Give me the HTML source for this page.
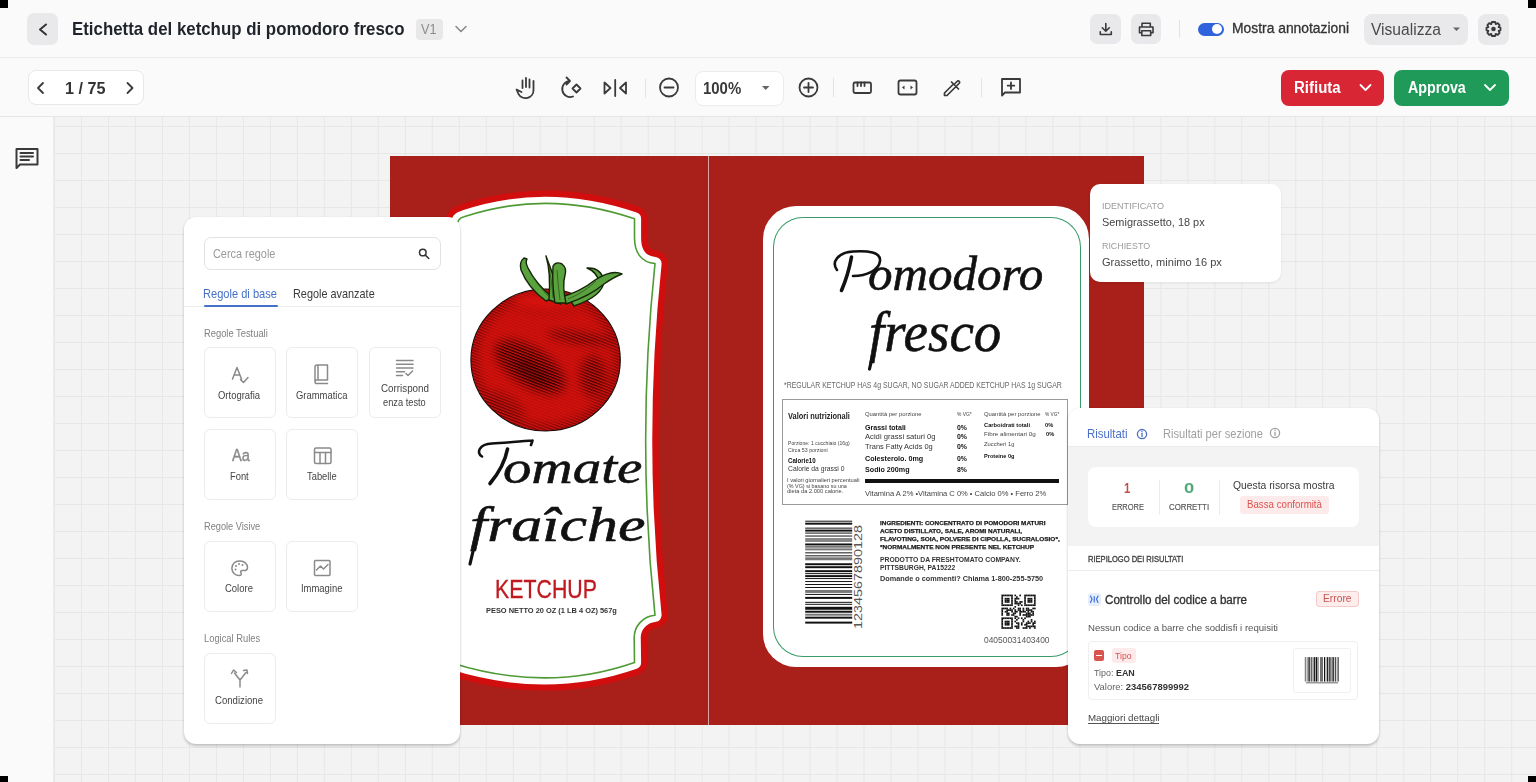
<!DOCTYPE html><html><head><meta charset="utf-8"><style>
*{margin:0;padding:0;box-sizing:border-box}
html,body{width:1536px;height:782px;overflow:hidden;background:#fafafa;font-family:"Liberation Sans",sans-serif}
body{position:relative}
.t{position:absolute;line-height:1;white-space:nowrap;transform-origin:0 0}
.a{position:absolute}
.ibtn{position:absolute;background:#e9e9eb;border-radius:7px}
svg{position:absolute;overflow:visible}
.tile{position:absolute;background:#fff;border:1px solid #ececec;border-radius:6px}
</style></head><body><div class="a" style="left:0;top:0;width:1536px;height:58px;background:#fafafa;border-bottom:1px solid #ebebeb"></div>
<div class="a" style="left:0;top:58px;width:1536px;height:59px;background:#fafafa;border-bottom:1px solid #e6e6e6"></div>
<div class="a" style="left:0;top:117px;width:54px;height:665px;background:#fafafa;border-right:1px solid #ececec"></div>
<div class="a" style="left:54px;top:117px;width:1482px;height:665px;background-color:#f3f3f3;background-image:linear-gradient(to right,#e7e7e7 1px,transparent 1px),linear-gradient(to bottom,#e7e7e7 1px,transparent 1px);background-size:26.99px 27px;background-position:0px 9px"></div>
<div class="ibtn" style="left:27px;top:13px;width:31px;height:32px"></div>
<svg style="left:0;top:0" width="1536" height="117"><g fill="none" stroke="#333" stroke-width="2" stroke-linecap="round" stroke-linejoin="round"><path d="M46 24.5 L40 29.5 L46 34.5"/><path d="M456 26.5 L461 31.5 L466 26.5" stroke="#8a8a8a" stroke-width="1.6"/></g></svg>
<div id="t1" class="t" style="left:71.89px;top:19.85px;font-size:18.60px;color:#1f232a;font-weight:700;font-family:'Liberation Sans';transform:scaleX(0.9064);">Etichetta del ketchup di pomodoro fresco</div>
<div class="a" style="left:416px;top:19px;width:27px;height:21px;background:#e8e8e8;border-radius:4px"></div>
<div id="t2" class="t" style="left:421.00px;top:22.28px;font-size:14.20px;color:#8c8c8c;font-weight:400;font-family:'Liberation Sans';transform:scaleX(0.8933);">V1</div>
<div class="ibtn" style="left:1090px;top:14px;width:31px;height:30px"></div>
<div class="ibtn" style="left:1131px;top:14px;width:30px;height:30px"></div>
<div class="a" style="left:1179px;top:20px;width:1px;height:18px;background:#e2e2e2"></div>
<div class="a" style="left:1198px;top:22.5px;width:26px;height:13.5px;background:#2f62dc;border-radius:7px"></div>
<div class="a" style="left:1212px;top:24.3px;width:10px;height:10px;background:#fff;border-radius:50%"></div>
<div id="t3" class="t" style="left:1232.00px;top:22.32px;font-size:13.80px;color:#333;font-weight:400;font-family:'Liberation Sans';transform:scaleX(1.0043);-webkit-text-stroke:0.3px #333;">Mostra annotazioni</div>
<div class="ibtn" style="left:1364px;top:13.5px;width:104px;height:31px;border-radius:8px"></div>
<div id="t4" class="t" style="left:1371.00px;top:21.75px;font-size:16.00px;color:#4a4a4a;font-weight:400;font-family:'Liberation Sans';transform:scaleX(0.9743);">Visualizza</div>
<div class="ibtn" style="left:1478px;top:13.5px;width:31px;height:31px;border-radius:8px"></div>
<svg style="left:0;top:0" width="1536" height="60"><g fill="none" stroke="#3a3a3a" stroke-width="1.6" stroke-linecap="round" stroke-linejoin="round"><path d="M1105.8 23.5 V31.2 M1102.3 27.8 L1105.8 31.3 L1109.3 27.8 M1100.3 31.8 V34.5 H1111.3 V31.8"/><path d="M1142 26.8 V23.3 H1150.3 V26.8 M1141.3 32.8 H1139.5 V27 H1153 V32.8 H1151.2 M1141.8 30.8 H1150.7 V35.5 H1141.8 Z"/></g><path d="M1453 27.5 L1460 27.5 L1456.5 31 Z" fill="#666"/><g transform="translate(1493.5,29)"><path fill="none" stroke="#3a3a3a" stroke-width="1.8" stroke-linejoin="round" d="M-1.6 -7 L1.6 -7 L2.2 -4.9 L4.3 -5.9 L6.1 -3.9 L5.1 -1.9 L7 -1.3 V1.3 L5.1 1.9 L6.1 3.9 L4.3 5.9 L2.2 4.9 L1.6 7 H-1.6 L-2.2 4.9 L-4.3 5.9 L-6.1 3.9 L-5.1 1.9 L-7 1.3 V-1.3 L-5.1 -1.9 L-6.1 -3.9 L-4.3 -5.9 L-2.2 -4.9 Z"/><circle r="2.3" fill="#3a3a3a"/></g></svg>
<div class="a" style="left:27.5px;top:70px;width:116px;height:35px;background:#fff;border:1px solid #e8e8e8;border-radius:8px"></div>
<div id="t5" class="t" style="left:64.61px;top:80.30px;font-size:16.30px;color:#333;font-weight:700;font-family:'Liberation Sans';transform:scaleX(0.9929);">1 / 75</div>
<div class="a" style="left:694.5px;top:70.5px;width:89px;height:35px;background:#fff;border:1px solid #ececec;border-radius:8px"></div>
<div id="t6" class="t" style="left:702.75px;top:80.62px;font-size:15.80px;color:#383838;font-weight:700;font-family:'Liberation Sans';transform:scaleX(0.9452);">100%</div>
<div class="a" style="left:645px;top:78.5px;width:1px;height:19px;background:#e3e3e3"></div>
<div class="a" style="left:833px;top:78px;width:1px;height:19px;background:#e3e3e3"></div>
<div class="a" style="left:981px;top:78px;width:1px;height:19px;background:#e3e3e3"></div>
<div class="a" style="left:1281px;top:70px;width:103px;height:35.5px;background:#d82634;border-radius:8px"></div>
<div class="a" style="left:1393.5px;top:70px;width:115.5px;height:35.5px;background:#1f9a59;border-radius:8px"></div>
<div id="t7" class="t" style="left:1294.06px;top:80.45px;font-size:16.00px;color:#fff;font-weight:700;font-family:'Liberation Sans';transform:scaleX(0.9371);">Rifiuta</div>
<div id="t8" class="t" style="left:1407.50px;top:80.45px;font-size:16.00px;color:#fff;font-weight:700;font-family:'Liberation Sans';transform:scaleX(0.8892);">Approva</div>
<svg style="left:0;top:0" width="1536" height="117"><g fill="none" stroke="#3a3a3a" stroke-width="1.8" stroke-linecap="round" stroke-linejoin="round"><path d="M43 83 L38 88 L43 93"/><path d="M127.5 83 L132.5 88 L127.5 93"/><path d="M1360.5 85 L1365.5 90 L1370.5 85" stroke="#fff"/><path d="M1485 85 L1490 90 L1495 85" stroke="#fff"/><path d="M522.5 88 V80.5 M526 87 V78 M529.5 87.5 V79.5 M533.5 81 V90 A8 8 0 0 1 518.5 94 L516.5 89.5 L521.5 92"/><path d="M570 81 A8 8 0 1 0 573 96.5 M566.5 77.5 L570 81 L566.5 84.5"/><path d="M572.5 88.5 L576.5 84.5 L580.5 88.5 L576.5 92.5 Z"/><path d="M604.5 82.5 V93.5 L610.5 88 Z M626 82.5 V93.5 L620 88 Z M615.2 80 V96"/><circle cx="669" cy="87.5" r="9"/><path d="M664.5 87.5 H673.5"/><circle cx="808.5" cy="87.5" r="9"/><path d="M804 87.5 H813 M808.5 83 V92"/><rect x="853.5" y="82.5" width="17.5" height="10.5" rx="1.5"/><path d="M857.5 82.5 V86 M861 82.5 V86 M864.5 82.5 V86"/><rect x="898.5" y="80.5" width="18" height="14" rx="2"/><path d="M944.5 95.5 V93 L953.5 84 M944.5 95.5 H947 L956 86.5 M951.5 82 L958.5 89 M955 83.5 L957.5 81 A1.5 1.5 0 0 1 959.5 83 L957 85.5" stroke-width="1.7"/><path d="M1002 79 H1020 V92.5 H1005 L1002 95.5 Z M1011 82.5 V89 M1007.7 85.7 H1014.3"/></g><path d="M762 86 H769.5 L765.7 90 Z" fill="#666"/><path d="M904.5 85.5 L902 87.5 L904.5 89.5 Z M910.5 85.5 L913 87.5 L910.5 89.5 Z" fill="#3a3a3a"/></svg>
<svg style="left:0;top:0" width="60" height="200"><g fill="none" stroke="#3a3a3a" stroke-width="2" stroke-linejoin="round" stroke-linecap="round"><path d="M16.5 149 H37.5 V164.5 H20 L16.5 168 Z"/><path d="M20.5 153 H33 M20.5 156.5 H33 M20.5 160 H29"/></g></svg>
<div class="a" style="left:0px;top:0px;width:8px;height:8px;background:#000"></div>
<div class="a" style="left:1528px;top:0px;width:8px;height:8px;background:#000"></div>
<div class="a" style="left:0px;top:776px;width:8px;height:6px;background:#000"></div>
<div class="a" style="left:1528px;top:776px;width:8px;height:6px;background:#000"></div>
<div class="a" style="left:389.5px;top:156px;width:754.5px;height:569px;background:#a91f1a"></div>
<div class="a" style="left:708.3px;top:156px;width:1px;height:569px;background:#d9a6a3"></div>
<svg style="left:0;top:0" width="1536" height="782"><path d="M457 226 Q457 218.5 464 216.8 Q547 189 634.5 218.8 L634.5 238 C634.5 252 641 262.5 655 263.5 Q636.3 441.5 655 615.3 A22.5 22.5 0 0 0 634.2 639 L634.5 662.4 Q547 693 452 663 L452 640 Z" fill="#d20d0d" stroke="#d20d0d" stroke-width="25.5" stroke-linejoin="round"/><path d="M457 226 Q457 218.5 464 216.8 Q547 189 634.5 218.8 L634.5 238 C634.5 252 641 262.5 655 263.5 Q636.3 441.5 655 615.3 A22.5 22.5 0 0 0 634.2 639 L634.5 662.4 Q547 693 452 663 L452 640 Z" fill="#fff" stroke="#fff" stroke-width="13.2" stroke-linejoin="round"/><path d="M457 226 Q457 218.5 464 216.8 Q547 189 634.5 218.8 L634.5 238 C634.5 252 641 262.5 655 263.5 Q636.3 441.5 655 615.3 A22.5 22.5 0 0 0 634.2 639 L634.5 662.4 Q547 693 452 663 L452 640 Z" fill="none" stroke="#4f9a35" stroke-width="1.6" stroke-linejoin="round"/></svg>
<svg style="left:0;top:0" width="1536" height="782"><defs><pattern id="hp" width="60" height="2.7" patternUnits="userSpaceOnUse" patternTransform="rotate(21)"><rect width="60" height="1.35" fill="#1c0000"/></pattern><filter id="bl6" x="-50%" y="-50%" width="200%" height="200%"><feGaussianBlur stdDeviation="5"/></filter><filter id="bl3" x="-50%" y="-50%" width="200%" height="200%"><feGaussianBlur stdDeviation="3"/></filter><clipPath id="tc"><ellipse cx="545.6" cy="360" rx="74.7" ry="71"/></clipPath><mask id="tm" maskUnits="userSpaceOnUse" x="400" y="250" width="300" height="220"><g filter="url(#bl6)"><ellipse cx="545.6" cy="360" rx="74.7" ry="71" fill="#fff" fill-opacity="0.12"/><ellipse cx="545.6" cy="360" rx="74.7" ry="71" fill="none" stroke="#fff" stroke-opacity="0.55" stroke-width="14"/><ellipse cx="548" cy="300" rx="40" ry="14" fill="#000" fill-opacity="0.9"/><ellipse cx="530" cy="367" rx="40" ry="19" fill="#fff" transform="rotate(33 530 367)"/><ellipse cx="580" cy="338" rx="34" ry="5" fill="#fff" fill-opacity="0.9" transform="rotate(8 580 338)"/><ellipse cx="593" cy="376" rx="13" ry="21" fill="#fff" fill-opacity="0.8"/><ellipse cx="505" cy="405" rx="22" ry="10" fill="#fff" fill-opacity="0.5" transform="rotate(30 505 405)"/></g></mask></defs><ellipse cx="545.6" cy="360" rx="74.7" ry="71" fill="#d5110d"/><g clip-path="url(#tc)"><rect x="460" y="280" width="170" height="160" fill="url(#hp)" mask="url(#tm)"/><ellipse cx="532" cy="372" rx="20" ry="8" fill="#100000" opacity="0.25" filter="url(#bl3)" transform="rotate(33 532 372)"/></g><ellipse cx="545.6" cy="360" rx="74.7" ry="71" fill="none" stroke="#1a0a0a" stroke-width="1.1"/><g fill="#5aa23d" stroke="#142508" stroke-width="1.4" stroke-linejoin="round"><path d="M524 258 Q519 262 521 270 Q528 288 546 301 L553 298 Q536 284 528 268 Q525 262 527 259 Z"/><path d="M587 268 Q601 267 604 281 Q603 296 574 306 L570 300 Q597 292 599 282 Q597 272 587 268 Z"/><path d="M622 274 Q612 269 595 280 Q580 292 561 297 L566 304 Q590 296 604 284 Q614 277 622 274 Z"/><path d="M546 256 Q551 272 549 300 L561 304 Q557 284 546 256 Z"/><path d="M553 266 Q556 261 562 264 Q567 268 565 275 Q562 286 566 303 L555 303 Q552 286 553 266 Z"/></g><g fill="none" stroke="#1d3510" stroke-width="0.7" opacity="0.8"><path d="M548 262 Q552 280 553 298 M557 270 Q558 285 560 300 M530 272 Q538 286 548 296 M596 281 Q585 292 568 299"/></g></svg>
<div id="t9" class="t" style="left:502.79px;top:444.14px;font-size:47.00px;color:#111;font-weight:400;font-family:'Liberation Serif';transform:scaleX(1.2124);font-style:italic;-webkit-text-stroke:0.6px #111;">omate</div>
<svg style="left:0;top:0" width="1536" height="782"><g fill="none" stroke="#111" stroke-linecap="round"><path d="M482 456.5 C476 453 479 444 492 443.5 C505 443 520 441 532.5 440.5 M532.5 440.5 L531 445" stroke-width="2.6"/><path d="M507.5 449 C505 462 498 474 490 483.5" stroke-width="3.6"/></g></svg>
<div id="t10" class="t" style="left:470.00px;top:500.47px;font-size:49.00px;color:#111;font-weight:400;font-family:'Liberation Serif';transform:scaleX(1.2641);font-style:italic;-webkit-text-stroke:0.6px #111;">fra&icirc;che</div>
<svg style="left:0;top:0" width="1536" height="782"><g fill="none" stroke="#111" stroke-linecap="round"><path d="M474.5 545 L470 564" stroke-width="3.2"/></g></svg>
<div id="t11" class="t" style="left:495.33px;top:577.01px;font-size:25.50px;color:#c01a20;font-weight:400;font-family:'Liberation Sans';transform:scaleX(0.8364);-webkit-text-stroke:0.35px #c01a20;">KETCHUP</div>
<div id="t12" class="t" style="left:485.50px;top:607.17px;font-size:7.60px;color:#333;font-weight:700;font-family:'Liberation Sans';transform:scaleX(0.9761);">PESO NETTO 20 OZ (1 LB 4 OZ) 567g</div>
<div class="a" style="left:762.8px;top:206px;width:326.5px;height:460.5px;background:#fff;border-radius:33px"></div>
<div class="a" style="left:773px;top:216.5px;width:307.5px;height:140px;border:1.5px solid #3a9a6a;border-bottom:none;border-radius:30px 30px 0 0"></div>
<div class="a" style="left:773px;top:356px;width:307.5px;height:300.5px;border:1.5px solid #3a9a6a;border-top:none;border-radius:0 0 30px 30px"></div>
<div id="t13" class="t" style="left:867.98px;top:250.30px;font-size:48.00px;color:#111;font-weight:400;font-family:'Liberation Serif';transform:scaleX(1.0220);font-style:italic;-webkit-text-stroke:0.6px #111;">omodoro</div>
<svg style="left:0;top:0" width="1536" height="782"><g fill="none" stroke="#111" stroke-linecap="round"><path d="M851.5 257 C849.5 268 846 280 841.5 290.5" stroke-width="3.6"/><path d="M837 270 C831 262 838 252.5 853 251.5 C868 250.5 881 252 880 261 C879 270 867 276 853 276" stroke-width="2.6"/></g></svg>
<div id="t14" class="t" style="left:869.00px;top:304.11px;font-size:56.00px;color:#111;font-weight:400;font-family:'Liberation Serif';transform:scaleX(0.9815);font-style:italic;-webkit-text-stroke:0.6px #111;">fresco</div>
<svg style="left:0;top:0" width="1536" height="782"><path d="M872.3 357 L869.5 369" fill="none" stroke="#111" stroke-linecap="round" stroke-width="3.2"/></svg>
<div id="t15" class="t" style="left:783.50px;top:382.06px;font-size:8.20px;color:#666;font-weight:400;font-family:'Liberation Sans';transform:scaleX(0.8476);">*REGULAR KETCHUP HAS 4g SUGAR, NO SUGAR ADDED KETCHUP HAS 1g SUGAR</div>
<div class="a" style="left:782.4px;top:399.3px;width:286px;height:106px;border:1px solid #9a9a9a"></div>
<div id="t16" class="t" style="left:788.30px;top:412.47px;font-size:8.30px;color:#222;font-weight:700;font-family:'Liberation Sans';transform:scaleX(0.8933);">Valori nutrizionali</div>
<div id="t17" class="t" style="left:865.20px;top:411.76px;font-size:5.60px;color:#444;font-weight:400;font-family:'Liberation Sans';transform:scaleX(1.0487);">Quantit&agrave; per porzione</div>
<div id="t18" class="t" style="left:956.60px;top:411.76px;font-size:5.60px;color:#444;font-weight:400;font-family:'Liberation Sans';transform:scaleX(0.8745);">% VG*</div>
<div id="t19" class="t" style="left:983.60px;top:411.76px;font-size:5.60px;color:#444;font-weight:400;font-family:'Liberation Sans';transform:scaleX(1.0506);">Quantit&agrave; per porzione</div>
<div id="t20" class="t" style="left:1045.00px;top:411.76px;font-size:5.60px;color:#444;font-weight:400;font-family:'Liberation Sans';transform:scaleX(0.8518);">% VG*</div>
<div id="t21" class="t" style="left:865.20px;top:423.82px;font-size:7.30px;color:#111;font-weight:700;font-family:'Liberation Sans';transform:scaleX(0.9680);">Grassi totali</div>
<div id="t22" class="t" style="left:956.60px;top:423.82px;font-size:7.30px;color:#111;font-weight:700;font-family:'Liberation Sans';transform:scaleX(0.9405);">0%</div>
<div id="t23" class="t" style="left:865.20px;top:433.32px;font-size:7.30px;color:#333;font-weight:400;font-family:'Liberation Sans';transform:scaleX(1.0481);">Acidi grassi saturi 0g</div>
<div id="t24" class="t" style="left:957.20px;top:433.32px;font-size:7.30px;color:#111;font-weight:700;font-family:'Liberation Sans';transform:scaleX(0.9495);">0%</div>
<div id="t25" class="t" style="left:865.20px;top:443.12px;font-size:7.30px;color:#333;font-weight:400;font-family:'Liberation Sans';transform:scaleX(1.0228);">Trans Fatty Acids 0g</div>
<div id="t26" class="t" style="left:957.20px;top:443.12px;font-size:7.30px;color:#111;font-weight:700;font-family:'Liberation Sans';transform:scaleX(0.9495);">0%</div>
<div id="t27" class="t" style="left:865.20px;top:454.82px;font-size:7.30px;color:#111;font-weight:700;font-family:'Liberation Sans';transform:scaleX(0.9840);">Colesterolo. 0mg</div>
<div id="t28" class="t" style="left:956.60px;top:454.82px;font-size:7.30px;color:#111;font-weight:700;font-family:'Liberation Sans';transform:scaleX(0.9405);">0%</div>
<div id="t29" class="t" style="left:865.20px;top:465.62px;font-size:7.30px;color:#111;font-weight:700;font-family:'Liberation Sans';transform:scaleX(0.9810);">Sodio 200mg</div>
<div id="t30" class="t" style="left:956.60px;top:465.62px;font-size:7.30px;color:#111;font-weight:700;font-family:'Liberation Sans';transform:scaleX(0.9405);">8%</div>
<div id="t31" class="t" style="left:983.60px;top:422.89px;font-size:5.80px;color:#111;font-weight:700;font-family:'Liberation Sans';transform:scaleX(0.9921);">Carboidrati totali</div>
<div id="t32" class="t" style="left:1045.00px;top:422.89px;font-size:5.80px;color:#111;font-weight:700;font-family:'Liberation Sans';transform:scaleX(0.9728);">0%</div>
<div id="t33" class="t" style="left:983.60px;top:431.59px;font-size:5.80px;color:#444;font-weight:400;font-family:'Liberation Sans';transform:scaleX(1.0757);">Fibre alimentari 0g</div>
<div id="t34" class="t" style="left:1046.00px;top:431.59px;font-size:5.80px;color:#111;font-weight:700;font-family:'Liberation Sans';transform:scaleX(0.9728);">0%</div>
<div id="t35" class="t" style="left:983.60px;top:441.59px;font-size:5.80px;color:#444;font-weight:400;font-family:'Liberation Sans';transform:scaleX(1.0046);">Zuccheri 1g</div>
<div id="t36" class="t" style="left:983.60px;top:453.59px;font-size:5.80px;color:#111;font-weight:700;font-family:'Liberation Sans';transform:scaleX(0.9648);">Proteine 0g</div>
<div id="t37" class="t" style="left:788.00px;top:440.57px;font-size:5.00px;color:#444;font-weight:400;font-family:'Liberation Sans';transform:scaleX(1.0177);">Porzione: 1 cucchiaio (16g)</div>
<div id="t38" class="t" style="left:788.00px;top:448.27px;font-size:5.00px;color:#444;font-weight:400;font-family:'Liberation Sans';transform:scaleX(1.0560);">Circa 53 porzioni</div>
<div id="t39" class="t" style="left:788.30px;top:458.49px;font-size:7.10px;color:#111;font-weight:700;font-family:'Liberation Sans';transform:scaleX(0.8658);">Calorie10</div>
<div id="t40" class="t" style="left:788.30px;top:465.99px;font-size:7.10px;color:#333;font-weight:400;font-family:'Liberation Sans';transform:scaleX(0.9544);">Calorie da grassi 0</div>
<div id="t41" class="t" style="left:787.20px;top:478.27px;font-size:5.00px;color:#444;font-weight:400;font-family:'Liberation Sans';transform:scaleX(1.1380);">I valori giornalieri percentuali</div>
<div id="t42" class="t" style="left:787.20px;top:483.77px;font-size:5.00px;color:#444;font-weight:400;font-family:'Liberation Sans';transform:scaleX(1.0770);">(% VG) si basano su una</div>
<div id="t43" class="t" style="left:787.20px;top:489.27px;font-size:5.00px;color:#444;font-weight:400;font-family:'Liberation Sans';transform:scaleX(1.1431);">dieta da 2.000 calorie.</div>
<div class="a" style="left:864.8px;top:479px;width:194.4px;height:4.3px;background:#111"></div>
<div id="t44" class="t" style="left:865.00px;top:490.43px;font-size:7.40px;color:#444;font-weight:400;font-family:'Liberation Sans';transform:scaleX(1.0184);">Vitamina A 2% &bull;Vitamina C 0% &bull; Calcio 0% &bull; Ferro 2%</div>
<div id="t45" class="t" style="left:880.00px;top:519.85px;font-size:6.20px;color:#1a1a1a;font-weight:700;font-family:'Liberation Sans';transform:scaleX(1.0304);-webkit-text-stroke:0.25px #1a1a1a;">INGREDIENTI: CONCENTRATO DI POMODORI MATURI</div>
<div id="t46" class="t" style="left:880.00px;top:528.05px;font-size:6.20px;color:#1a1a1a;font-weight:700;font-family:'Liberation Sans';transform:scaleX(1.0333);-webkit-text-stroke:0.25px #1a1a1a;">ACETO DISTILLATO, SALE, AROMI NATURALI,</div>
<div id="t47" class="t" style="left:880.00px;top:535.85px;font-size:6.20px;color:#1a1a1a;font-weight:700;font-family:'Liberation Sans';transform:scaleX(1.0448);-webkit-text-stroke:0.25px #1a1a1a;">FLAVOTING, SOIA, POLVERE DI CIPOLLA, SUCRALOSIO*,</div>
<div id="t48" class="t" style="left:880.00px;top:543.95px;font-size:6.20px;color:#1a1a1a;font-weight:700;font-family:'Liberation Sans';transform:scaleX(1.0451);-webkit-text-stroke:0.25px #1a1a1a;">*NORMALMENTE NON PRESENTE NEL KETCHUP</div>
<div id="t49" class="t" style="left:880.00px;top:557.11px;font-size:6.60px;color:#333;font-weight:700;font-family:'Liberation Sans';transform:scaleX(1.0297);">PRODOTTO DA FRESHTOMATO COMPANY.</div>
<div id="t50" class="t" style="left:880.00px;top:565.41px;font-size:6.60px;color:#333;font-weight:700;font-family:'Liberation Sans';transform:scaleX(1.0222);">PITTSBURGH, PA15222</div>
<div id="t51" class="t" style="left:880.00px;top:576.11px;font-size:6.60px;color:#333;font-weight:700;font-family:'Liberation Sans';transform:scaleX(1.1074);">Domande o commenti? Chiama 1-800-255-5750</div>
<div id="t52" class="t" style="left:984.20px;top:636.86px;font-size:8.20px;color:#555;font-weight:400;font-family:'Liberation Sans';transform:scaleX(1.0281);">04050031403400</div>
<svg style="left:0;top:0" width="1536" height="782"><rect x="805.2" y="520.70" width="47" height="0.99" fill="#111"/><rect x="805.2" y="522.68" width="47" height="1.98" fill="#111"/><rect x="805.2" y="527.63" width="47" height="0.99" fill="#111"/><rect x="805.2" y="529.60" width="47" height="1.98" fill="#111"/><rect x="805.2" y="532.57" width="47" height="0.99" fill="#111"/><rect x="805.2" y="535.54" width="47" height="0.99" fill="#111"/><rect x="805.2" y="538.51" width="47" height="0.99" fill="#111"/><rect x="805.2" y="540.49" width="47" height="0.99" fill="#111"/><rect x="805.2" y="543.46" width="47" height="1.98" fill="#111"/><rect x="805.2" y="546.43" width="47" height="0.99" fill="#111"/><rect x="805.2" y="548.40" width="47" height="1.98" fill="#777"/><rect x="805.2" y="552.36" width="47" height="0.99" fill="#111"/><rect x="805.2" y="555.33" width="47" height="0.99" fill="#111"/><rect x="805.2" y="557.31" width="47" height="2.97" fill="#777"/><rect x="805.2" y="563.25" width="47" height="1.98" fill="#111"/><rect x="805.2" y="566.21" width="47" height="1.98" fill="#111"/><rect x="805.2" y="570.17" width="47" height="1.98" fill="#111"/><rect x="805.2" y="573.14" width="47" height="0.99" fill="#111"/><rect x="805.2" y="575.12" width="47" height="1.98" fill="#111"/><rect x="805.2" y="578.09" width="47" height="0.99" fill="#111"/><rect x="805.2" y="581.05" width="47" height="0.99" fill="#111"/><rect x="805.2" y="584.02" width="47" height="0.99" fill="#111"/><rect x="805.2" y="586.99" width="47" height="0.99" fill="#111"/><rect x="805.2" y="589.96" width="47" height="2.97" fill="#777"/><rect x="805.2" y="593.92" width="47" height="0.99" fill="#111"/><rect x="805.2" y="596.89" width="47" height="1.98" fill="#111"/><rect x="805.2" y="601.83" width="47" height="0.99" fill="#111"/><rect x="805.2" y="603.81" width="47" height="0.99" fill="#111"/><rect x="805.2" y="606.78" width="47" height="2.97" fill="#111"/><rect x="805.2" y="610.74" width="47" height="1.98" fill="#111"/><rect x="805.2" y="613.71" width="47" height="1.98" fill="#777"/><rect x="805.2" y="616.67" width="47" height="1.98" fill="#111"/><rect x="805.2" y="621.62" width="47" height="1.98" fill="#111"/></svg>
<div class="t" style="left:852.5px;top:629px;font-size:10.5px;color:#555;transform:rotate(-90deg) scaleX(1.37);transform-origin:0 0">1234567890128</div>
<svg style="left:0;top:0" width="1536" height="782"><g fill="#111"><rect x="1001.40" y="594.60" width="1.68" height="1.68"/><rect x="1003.03" y="594.60" width="1.68" height="1.68"/><rect x="1004.66" y="594.60" width="1.68" height="1.68"/><rect x="1006.29" y="594.60" width="1.68" height="1.68"/><rect x="1007.91" y="594.60" width="1.68" height="1.68"/><rect x="1009.54" y="594.60" width="1.68" height="1.68"/><rect x="1011.17" y="594.60" width="1.68" height="1.68"/><rect x="1001.40" y="596.23" width="1.68" height="1.68"/><rect x="1011.17" y="596.23" width="1.68" height="1.68"/><rect x="1001.40" y="597.86" width="1.68" height="1.68"/><rect x="1004.66" y="597.86" width="1.68" height="1.68"/><rect x="1006.29" y="597.86" width="1.68" height="1.68"/><rect x="1007.91" y="597.86" width="1.68" height="1.68"/><rect x="1011.17" y="597.86" width="1.68" height="1.68"/><rect x="1001.40" y="599.49" width="1.68" height="1.68"/><rect x="1004.66" y="599.49" width="1.68" height="1.68"/><rect x="1006.29" y="599.49" width="1.68" height="1.68"/><rect x="1007.91" y="599.49" width="1.68" height="1.68"/><rect x="1011.17" y="599.49" width="1.68" height="1.68"/><rect x="1001.40" y="601.11" width="1.68" height="1.68"/><rect x="1004.66" y="601.11" width="1.68" height="1.68"/><rect x="1006.29" y="601.11" width="1.68" height="1.68"/><rect x="1007.91" y="601.11" width="1.68" height="1.68"/><rect x="1011.17" y="601.11" width="1.68" height="1.68"/><rect x="1001.40" y="602.74" width="1.68" height="1.68"/><rect x="1011.17" y="602.74" width="1.68" height="1.68"/><rect x="1001.40" y="604.37" width="1.68" height="1.68"/><rect x="1003.03" y="604.37" width="1.68" height="1.68"/><rect x="1004.66" y="604.37" width="1.68" height="1.68"/><rect x="1006.29" y="604.37" width="1.68" height="1.68"/><rect x="1007.91" y="604.37" width="1.68" height="1.68"/><rect x="1009.54" y="604.37" width="1.68" height="1.68"/><rect x="1011.17" y="604.37" width="1.68" height="1.68"/><rect x="1024.20" y="594.60" width="1.68" height="1.68"/><rect x="1025.83" y="594.60" width="1.68" height="1.68"/><rect x="1027.46" y="594.60" width="1.68" height="1.68"/><rect x="1029.09" y="594.60" width="1.68" height="1.68"/><rect x="1030.71" y="594.60" width="1.68" height="1.68"/><rect x="1032.34" y="594.60" width="1.68" height="1.68"/><rect x="1033.97" y="594.60" width="1.68" height="1.68"/><rect x="1024.20" y="596.23" width="1.68" height="1.68"/><rect x="1033.97" y="596.23" width="1.68" height="1.68"/><rect x="1024.20" y="597.86" width="1.68" height="1.68"/><rect x="1027.46" y="597.86" width="1.68" height="1.68"/><rect x="1029.09" y="597.86" width="1.68" height="1.68"/><rect x="1030.71" y="597.86" width="1.68" height="1.68"/><rect x="1033.97" y="597.86" width="1.68" height="1.68"/><rect x="1024.20" y="599.49" width="1.68" height="1.68"/><rect x="1027.46" y="599.49" width="1.68" height="1.68"/><rect x="1029.09" y="599.49" width="1.68" height="1.68"/><rect x="1030.71" y="599.49" width="1.68" height="1.68"/><rect x="1033.97" y="599.49" width="1.68" height="1.68"/><rect x="1024.20" y="601.11" width="1.68" height="1.68"/><rect x="1027.46" y="601.11" width="1.68" height="1.68"/><rect x="1029.09" y="601.11" width="1.68" height="1.68"/><rect x="1030.71" y="601.11" width="1.68" height="1.68"/><rect x="1033.97" y="601.11" width="1.68" height="1.68"/><rect x="1024.20" y="602.74" width="1.68" height="1.68"/><rect x="1033.97" y="602.74" width="1.68" height="1.68"/><rect x="1024.20" y="604.37" width="1.68" height="1.68"/><rect x="1025.83" y="604.37" width="1.68" height="1.68"/><rect x="1027.46" y="604.37" width="1.68" height="1.68"/><rect x="1029.09" y="604.37" width="1.68" height="1.68"/><rect x="1030.71" y="604.37" width="1.68" height="1.68"/><rect x="1032.34" y="604.37" width="1.68" height="1.68"/><rect x="1033.97" y="604.37" width="1.68" height="1.68"/><rect x="1001.40" y="617.40" width="1.68" height="1.68"/><rect x="1003.03" y="617.40" width="1.68" height="1.68"/><rect x="1004.66" y="617.40" width="1.68" height="1.68"/><rect x="1006.29" y="617.40" width="1.68" height="1.68"/><rect x="1007.91" y="617.40" width="1.68" height="1.68"/><rect x="1009.54" y="617.40" width="1.68" height="1.68"/><rect x="1011.17" y="617.40" width="1.68" height="1.68"/><rect x="1001.40" y="619.03" width="1.68" height="1.68"/><rect x="1011.17" y="619.03" width="1.68" height="1.68"/><rect x="1001.40" y="620.66" width="1.68" height="1.68"/><rect x="1004.66" y="620.66" width="1.68" height="1.68"/><rect x="1006.29" y="620.66" width="1.68" height="1.68"/><rect x="1007.91" y="620.66" width="1.68" height="1.68"/><rect x="1011.17" y="620.66" width="1.68" height="1.68"/><rect x="1001.40" y="622.29" width="1.68" height="1.68"/><rect x="1004.66" y="622.29" width="1.68" height="1.68"/><rect x="1006.29" y="622.29" width="1.68" height="1.68"/><rect x="1007.91" y="622.29" width="1.68" height="1.68"/><rect x="1011.17" y="622.29" width="1.68" height="1.68"/><rect x="1001.40" y="623.91" width="1.68" height="1.68"/><rect x="1004.66" y="623.91" width="1.68" height="1.68"/><rect x="1006.29" y="623.91" width="1.68" height="1.68"/><rect x="1007.91" y="623.91" width="1.68" height="1.68"/><rect x="1011.17" y="623.91" width="1.68" height="1.68"/><rect x="1001.40" y="625.54" width="1.68" height="1.68"/><rect x="1011.17" y="625.54" width="1.68" height="1.68"/><rect x="1001.40" y="627.17" width="1.68" height="1.68"/><rect x="1003.03" y="627.17" width="1.68" height="1.68"/><rect x="1004.66" y="627.17" width="1.68" height="1.68"/><rect x="1006.29" y="627.17" width="1.68" height="1.68"/><rect x="1007.91" y="627.17" width="1.68" height="1.68"/><rect x="1009.54" y="627.17" width="1.68" height="1.68"/><rect x="1011.17" y="627.17" width="1.68" height="1.68"/><rect x="1014.43" y="594.60" width="1.68" height="1.68"/><rect x="1019.31" y="594.60" width="1.68" height="1.68"/><rect x="1016.06" y="596.23" width="1.68" height="1.68"/><rect x="1014.43" y="597.86" width="1.68" height="1.68"/><rect x="1016.06" y="597.86" width="1.68" height="1.68"/><rect x="1017.69" y="597.86" width="1.68" height="1.68"/><rect x="1014.43" y="599.49" width="1.68" height="1.68"/><rect x="1014.43" y="601.11" width="1.68" height="1.68"/><rect x="1016.06" y="601.11" width="1.68" height="1.68"/><rect x="1019.31" y="601.11" width="1.68" height="1.68"/><rect x="1020.94" y="601.11" width="1.68" height="1.68"/><rect x="1014.43" y="602.74" width="1.68" height="1.68"/><rect x="1016.06" y="602.74" width="1.68" height="1.68"/><rect x="1017.69" y="602.74" width="1.68" height="1.68"/><rect x="1019.31" y="602.74" width="1.68" height="1.68"/><rect x="1017.69" y="604.37" width="1.68" height="1.68"/><rect x="1020.94" y="604.37" width="1.68" height="1.68"/><rect x="1014.43" y="606.00" width="1.68" height="1.68"/><rect x="1001.40" y="607.63" width="1.68" height="1.68"/><rect x="1003.03" y="607.63" width="1.68" height="1.68"/><rect x="1004.66" y="607.63" width="1.68" height="1.68"/><rect x="1006.29" y="607.63" width="1.68" height="1.68"/><rect x="1009.54" y="607.63" width="1.68" height="1.68"/><rect x="1012.80" y="607.63" width="1.68" height="1.68"/><rect x="1017.69" y="607.63" width="1.68" height="1.68"/><rect x="1019.31" y="607.63" width="1.68" height="1.68"/><rect x="1022.57" y="607.63" width="1.68" height="1.68"/><rect x="1025.83" y="607.63" width="1.68" height="1.68"/><rect x="1027.46" y="607.63" width="1.68" height="1.68"/><rect x="1032.34" y="607.63" width="1.68" height="1.68"/><rect x="1033.97" y="607.63" width="1.68" height="1.68"/><rect x="1001.40" y="609.26" width="1.68" height="1.68"/><rect x="1006.29" y="609.26" width="1.68" height="1.68"/><rect x="1007.91" y="609.26" width="1.68" height="1.68"/><rect x="1009.54" y="609.26" width="1.68" height="1.68"/><rect x="1011.17" y="609.26" width="1.68" height="1.68"/><rect x="1014.43" y="609.26" width="1.68" height="1.68"/><rect x="1017.69" y="609.26" width="1.68" height="1.68"/><rect x="1019.31" y="609.26" width="1.68" height="1.68"/><rect x="1022.57" y="609.26" width="1.68" height="1.68"/><rect x="1025.83" y="609.26" width="1.68" height="1.68"/><rect x="1027.46" y="609.26" width="1.68" height="1.68"/><rect x="1029.09" y="609.26" width="1.68" height="1.68"/><rect x="1030.71" y="609.26" width="1.68" height="1.68"/><rect x="1001.40" y="610.89" width="1.68" height="1.68"/><rect x="1004.66" y="610.89" width="1.68" height="1.68"/><rect x="1006.29" y="610.89" width="1.68" height="1.68"/><rect x="1011.17" y="610.89" width="1.68" height="1.68"/><rect x="1014.43" y="610.89" width="1.68" height="1.68"/><rect x="1016.06" y="610.89" width="1.68" height="1.68"/><rect x="1019.31" y="610.89" width="1.68" height="1.68"/><rect x="1020.94" y="610.89" width="1.68" height="1.68"/><rect x="1022.57" y="610.89" width="1.68" height="1.68"/><rect x="1024.20" y="610.89" width="1.68" height="1.68"/><rect x="1027.46" y="610.89" width="1.68" height="1.68"/><rect x="1030.71" y="610.89" width="1.68" height="1.68"/><rect x="1032.34" y="610.89" width="1.68" height="1.68"/><rect x="1001.40" y="612.51" width="1.68" height="1.68"/><rect x="1006.29" y="612.51" width="1.68" height="1.68"/><rect x="1007.91" y="612.51" width="1.68" height="1.68"/><rect x="1012.80" y="612.51" width="1.68" height="1.68"/><rect x="1014.43" y="612.51" width="1.68" height="1.68"/><rect x="1019.31" y="612.51" width="1.68" height="1.68"/><rect x="1025.83" y="612.51" width="1.68" height="1.68"/><rect x="1027.46" y="612.51" width="1.68" height="1.68"/><rect x="1029.09" y="612.51" width="1.68" height="1.68"/><rect x="1032.34" y="612.51" width="1.68" height="1.68"/><rect x="1001.40" y="614.14" width="1.68" height="1.68"/><rect x="1006.29" y="614.14" width="1.68" height="1.68"/><rect x="1007.91" y="614.14" width="1.68" height="1.68"/><rect x="1011.17" y="614.14" width="1.68" height="1.68"/><rect x="1012.80" y="614.14" width="1.68" height="1.68"/><rect x="1019.31" y="614.14" width="1.68" height="1.68"/><rect x="1022.57" y="614.14" width="1.68" height="1.68"/><rect x="1024.20" y="614.14" width="1.68" height="1.68"/><rect x="1025.83" y="614.14" width="1.68" height="1.68"/><rect x="1027.46" y="614.14" width="1.68" height="1.68"/><rect x="1029.09" y="614.14" width="1.68" height="1.68"/><rect x="1030.71" y="614.14" width="1.68" height="1.68"/><rect x="1032.34" y="614.14" width="1.68" height="1.68"/><rect x="1014.43" y="615.77" width="1.68" height="1.68"/><rect x="1016.06" y="615.77" width="1.68" height="1.68"/><rect x="1025.83" y="615.77" width="1.68" height="1.68"/><rect x="1027.46" y="615.77" width="1.68" height="1.68"/><rect x="1029.09" y="615.77" width="1.68" height="1.68"/><rect x="1014.43" y="617.40" width="1.68" height="1.68"/><rect x="1017.69" y="617.40" width="1.68" height="1.68"/><rect x="1020.94" y="617.40" width="1.68" height="1.68"/><rect x="1024.20" y="617.40" width="1.68" height="1.68"/><rect x="1016.06" y="619.03" width="1.68" height="1.68"/><rect x="1022.57" y="619.03" width="1.68" height="1.68"/><rect x="1030.71" y="619.03" width="1.68" height="1.68"/><rect x="1014.43" y="620.66" width="1.68" height="1.68"/><rect x="1022.57" y="620.66" width="1.68" height="1.68"/><rect x="1027.46" y="620.66" width="1.68" height="1.68"/><rect x="1030.71" y="620.66" width="1.68" height="1.68"/><rect x="1033.97" y="620.66" width="1.68" height="1.68"/><rect x="1016.06" y="622.29" width="1.68" height="1.68"/><rect x="1017.69" y="622.29" width="1.68" height="1.68"/><rect x="1020.94" y="622.29" width="1.68" height="1.68"/><rect x="1025.83" y="622.29" width="1.68" height="1.68"/><rect x="1027.46" y="622.29" width="1.68" height="1.68"/><rect x="1029.09" y="622.29" width="1.68" height="1.68"/><rect x="1032.34" y="622.29" width="1.68" height="1.68"/><rect x="1033.97" y="622.29" width="1.68" height="1.68"/><rect x="1017.69" y="623.91" width="1.68" height="1.68"/><rect x="1020.94" y="623.91" width="1.68" height="1.68"/><rect x="1024.20" y="623.91" width="1.68" height="1.68"/><rect x="1025.83" y="623.91" width="1.68" height="1.68"/><rect x="1032.34" y="623.91" width="1.68" height="1.68"/><rect x="1014.43" y="625.54" width="1.68" height="1.68"/><rect x="1016.06" y="625.54" width="1.68" height="1.68"/><rect x="1017.69" y="625.54" width="1.68" height="1.68"/><rect x="1025.83" y="625.54" width="1.68" height="1.68"/><rect x="1027.46" y="625.54" width="1.68" height="1.68"/><rect x="1029.09" y="625.54" width="1.68" height="1.68"/><rect x="1030.71" y="625.54" width="1.68" height="1.68"/><rect x="1032.34" y="625.54" width="1.68" height="1.68"/><rect x="1033.97" y="625.54" width="1.68" height="1.68"/><rect x="1016.06" y="627.17" width="1.68" height="1.68"/><rect x="1017.69" y="627.17" width="1.68" height="1.68"/><rect x="1022.57" y="627.17" width="1.68" height="1.68"/><rect x="1024.20" y="627.17" width="1.68" height="1.68"/><rect x="1025.83" y="627.17" width="1.68" height="1.68"/><rect x="1029.09" y="627.17" width="1.68" height="1.68"/><rect x="1033.97" y="627.17" width="1.68" height="1.68"/></g></svg>
<div class="a" style="left:184px;top:217px;width:276px;height:526.5px;background:#fff;border-radius:12px;box-shadow:0 2px 3px rgba(0,0,0,0.2),0 0 2px rgba(0,0,0,0.07)"></div>
<div class="a" style="left:203.5px;top:236.8px;width:237px;height:33px;border:1px solid #e2e2e2;border-radius:7px"></div>
<div id="t53" class="t" style="left:213.40px;top:247.60px;font-size:12.40px;color:#9b9b9b;font-weight:400;font-family:'Liberation Sans';transform:scaleX(0.8797);">Cerca regole</div>
<svg style="left:0;top:0" width="500" height="782"><g fill="none" stroke="#333" stroke-width="1.5" stroke-linecap="round"><circle cx="422.8" cy="252.5" r="3.3"/><path d="M425.3 255.1 L428.8 258.5"/></g></svg>
<div id="t54" class="t" style="left:202.61px;top:287.60px;font-size:12.40px;color:#4470c8;font-weight:400;font-family:'Liberation Sans';transform:scaleX(0.8940);">Regole di base</div>
<div id="t55" class="t" style="left:292.92px;top:287.60px;font-size:12.40px;color:#3a3a3a;font-weight:400;font-family:'Liberation Sans';transform:scaleX(0.8783);">Regole avanzate</div>
<div class="a" style="left:184px;top:306px;width:276px;height:1px;background:#ececec"></div>
<div class="a" style="left:203.5px;top:304.8px;width:74.5px;height:2.2px;background:#4470c8;border-radius:1px"></div>
<div id="t56" class="t" style="left:203.80px;top:327.64px;font-size:10.70px;color:#808080;font-weight:400;font-family:'Liberation Sans';transform:scaleX(0.8748);">Regole Testuali</div>
<div id="t57" class="t" style="left:203.70px;top:521.24px;font-size:10.70px;color:#808080;font-weight:400;font-family:'Liberation Sans';transform:scaleX(0.8634);">Regole Visive</div>
<div id="t58" class="t" style="left:203.80px;top:633.14px;font-size:10.70px;color:#808080;font-weight:400;font-family:'Liberation Sans';transform:scaleX(0.8744);">Logical Rules</div>
<div class="tile" style="left:203.5px;top:346.7px;width:72px;height:71.5px"></div>
<div class="tile" style="left:286.4px;top:346.7px;width:72px;height:71.5px"></div>
<div class="tile" style="left:368.6px;top:346.7px;width:72px;height:71.5px"></div>
<div class="tile" style="left:203.5px;top:428.5px;width:72px;height:71.5px"></div>
<div class="tile" style="left:286.4px;top:428.5px;width:72px;height:71.5px"></div>
<div class="tile" style="left:203.5px;top:540.5px;width:72px;height:71.5px"></div>
<div class="tile" style="left:286.4px;top:540.5px;width:72px;height:71.5px"></div>
<div class="tile" style="left:203.5px;top:652.5px;width:72px;height:71.5px"></div>
<div id="t59" class="t" style="left:217.90px;top:390.65px;font-size:10.10px;color:#444;font-weight:400;font-family:'Liberation Sans';transform:scaleX(0.9367);">Ortografia</div>
<div id="t60" class="t" style="left:295.70px;top:390.65px;font-size:10.10px;color:#444;font-weight:400;font-family:'Liberation Sans';transform:scaleX(0.9359);">Grammatica</div>
<div id="t61" class="t" style="left:381.00px;top:384.25px;font-size:10.10px;color:#444;font-weight:400;font-family:'Liberation Sans';transform:scaleX(0.9722);">Corrispond</div>
<div id="t62" class="t" style="left:383.10px;top:397.65px;font-size:10.10px;color:#444;font-weight:400;font-family:'Liberation Sans';transform:scaleX(0.9178);">enza testo</div>
<div id="t63" class="t" style="left:231.80px;top:447.34px;font-size:17.20px;color:#8a8a8a;font-weight:400;font-family:'Liberation Sans';transform:scaleX(0.8526);-webkit-text-stroke:0.4px #8a8a8a;">Aa</div>
<div id="t64" class="t" style="left:229.50px;top:472.25px;font-size:10.10px;color:#444;font-weight:400;font-family:'Liberation Sans';transform:scaleX(0.9268);">Font</div>
<div id="t65" class="t" style="left:306.80px;top:472.25px;font-size:10.10px;color:#444;font-weight:400;font-family:'Liberation Sans';transform:scaleX(0.9267);">Tabelle</div>
<div id="t66" class="t" style="left:225.30px;top:583.95px;font-size:10.10px;color:#444;font-weight:400;font-family:'Liberation Sans';transform:scaleX(0.9396);">Colore</div>
<div id="t67" class="t" style="left:300.90px;top:583.95px;font-size:10.10px;color:#444;font-weight:400;font-family:'Liberation Sans';transform:scaleX(0.9350);">Immagine</div>
<div id="t68" class="t" style="left:214.80px;top:696.15px;font-size:10.10px;color:#444;font-weight:400;font-family:'Liberation Sans';transform:scaleX(0.9511);">Condizione</div>
<svg style="left:0;top:0" width="500" height="782"><g fill="none" stroke="#8a8a8a" stroke-width="1.5" stroke-linecap="round" stroke-linejoin="round"><path d="M232.5 379 L237 367.5 L241.5 379 M234.2 375 H239.8 M240.5 379.5 L243.5 382.5 L248 377.5"/><path d="M315 381.5 V367 A2 2 0 0 1 317 365 H327.5 V380 H317 A2 2 0 0 0 315 382 A1.5 1.5 0 0 0 317 383.5 H327.5 M318 365 V380"/><path d="M396.5 360.5 H413 M396.5 364.3 H413 M396.5 368 H413 M396.5 371.8 H404.5 M396.5 375.5 H402.5 M406 373.5 L408 375.5 L412.5 371"/><rect x="314.5" y="448" width="16.5" height="15.5" rx="1.5"/><path d="M314.5 452.5 H331 M320 452.5 V463.5 M325.5 452.5 V463.5"/><path d="M240 561 A7.3 7.3 0 1 0 240 575.5 A1.5 1.5 0 0 0 241 573 A1.5 1.5 0 0 1 242.2 570.5 H244.5 A3 3 0 0 0 247.5 567.5 A7.3 6.5 0 0 0 240 561 Z"/><rect x="314.5" y="560.5" width="15.5" height="15" rx="1"/><path d="M316.5 570 L320.5 566 L323.5 569 L328 564.5"/><path d="M240 687 V680 L234.5 673 M240 680 L246 672.5 M231.5 673.5 L233.5 670 L236.5 672.5 M243.5 670.5 L247 670 L247.5 673.5"/></g><g fill="#8a8a8a"><circle cx="236" cy="566" r="1"/><circle cx="239" cy="564" r="1"/><circle cx="242.5" cy="565" r="1"/><circle cx="235.5" cy="569.5" r="1"/></g></svg>
<div class="a" style="left:1090px;top:183.7px;width:190.5px;height:98.5px;background:#fff;border-radius:10px;box-shadow:0 1px 3px rgba(0,0,0,0.08)"></div>
<div id="t69" class="t" style="left:1102.20px;top:200.52px;font-size:9.90px;color:#9a9a9a;font-weight:400;font-family:'Liberation Sans';transform:scaleX(0.9164);">IDENTIFICATO</div>
<div id="t70" class="t" style="left:1102.20px;top:215.68px;font-size:11.60px;color:#454545;font-weight:400;font-family:'Liberation Sans';transform:scaleX(0.9422);">Semigrassetto, 18 px</div>
<div id="t71" class="t" style="left:1102.20px;top:241.32px;font-size:9.90px;color:#9a9a9a;font-weight:400;font-family:'Liberation Sans';transform:scaleX(0.8960);">RICHIESTO</div>
<div id="t72" class="t" style="left:1102.20px;top:256.38px;font-size:11.60px;color:#454545;font-weight:400;font-family:'Liberation Sans';transform:scaleX(0.9535);">Grassetto, minimo 16 px</div>
<div class="a" style="left:1068px;top:408px;width:310.5px;height:335.5px;background:#fff;border-radius:12px;box-shadow:0 2px 3px rgba(0,0,0,0.2),0 0 2px rgba(0,0,0,0.07);overflow:hidden"><div class="a" style="left:0;top:38px;width:100%;height:100px;background:#f3f3f3;border-top:1px solid #ececec"></div><div class="a" style="left:0;top:162px;width:100%;height:1px;background:#ececec"></div></div>
<div id="t73" class="t" style="left:1086.78px;top:428.40px;font-size:12.40px;color:#4a6fc7;font-weight:400;font-family:'Liberation Sans';transform:scaleX(0.9169);">Risultati</div>
<div id="t74" class="t" style="left:1162.50px;top:428.40px;font-size:12.40px;color:#a0a0a0;font-weight:400;font-family:'Liberation Sans';transform:scaleX(0.8954);">Risultati per sezione</div>
<svg style="left:0;top:0" width="1536" height="782"><g fill="none" stroke-width="1.3"><circle cx="1142" cy="434.1" r="4.6" stroke="#4a6fc7"/><circle cx="1275" cy="433" r="4.6" stroke="#a0a0a0"/></g><g stroke-width="1.3" stroke-linecap="round"><path d="M1142 433.2 V436.6" stroke="#4a6fc7"/><path d="M1275 432.1 V435.5" stroke="#a0a0a0"/></g><circle cx="1142" cy="431.4" r="0.7" fill="#4a6fc7"/><circle cx="1275" cy="430.3" r="0.7" fill="#a0a0a0"/></svg>
<div class="a" style="left:1087.9px;top:467.2px;width:271px;height:60px;background:#fff;border-radius:8px"></div>
<div class="a" style="left:1158.5px;top:480px;width:1px;height:34.5px;background:#ececec"></div>
<div class="a" style="left:1219.3px;top:480px;width:1px;height:34.5px;background:#ececec"></div>
<div id="t75" class="t" style="left:1124.40px;top:479.78px;font-size:15.50px;color:#c0504a;font-weight:700;font-family:'Liberation Sans';transform:scaleX(0.7333);">1</div>
<div id="t76" class="t" style="left:1183.80px;top:479.78px;font-size:15.50px;color:#52a877;font-weight:700;font-family:'Liberation Sans';transform:scaleX(1.1875);">0</div>
<div id="t77" class="t" style="left:1111.70px;top:503.13px;font-size:8.70px;color:#555;font-weight:400;font-family:'Liberation Sans';transform:scaleX(0.8589);-webkit-text-stroke:0.15px #555;">ERRORE</div>
<div id="t78" class="t" style="left:1168.70px;top:503.13px;font-size:8.70px;color:#555;font-weight:400;font-family:'Liberation Sans';transform:scaleX(0.9025);-webkit-text-stroke:0.15px #555;">CORRETTI</div>
<div id="t79" class="t" style="left:1232.50px;top:480.31px;font-size:11.80px;color:#3a3a3a;font-weight:400;font-family:'Liberation Sans';transform:scaleX(0.8757);">Questa risorsa mostra</div>
<div class="a" style="left:1239.5px;top:495.5px;width:89px;height:18.3px;background:#fdeaea;border-radius:3px"></div>
<div id="t80" class="t" style="left:1246.50px;top:498.81px;font-size:10.50px;color:#d9534f;font-weight:400;font-family:'Liberation Sans';transform:scaleX(0.9240);">Bassa conformit&agrave;</div>
<div id="t81" class="t" style="left:1087.60px;top:554.96px;font-size:8.90px;color:#444;font-weight:400;font-family:'Liberation Sans';transform:scaleX(0.8513);-webkit-text-stroke:0.35px #444;">RIEPILOGO DEI RISULTATI</div>
<div class="a" style="left:1087.7px;top:592.5px;width:13px;height:13.4px;background:#e6eefc;border-radius:3px"></div>
<svg style="left:0;top:0" width="1536" height="782"><g fill="none" stroke="#3d6fd6" stroke-width="1.2" stroke-linecap="round"><path d="M1090.5 596 L1092 599.2 L1090.5 602.4 M1098 596 L1096.5 599.2 L1098 602.4 M1094.25 596.5 V602"/></g></svg>
<div id="t82" class="t" style="left:1104.90px;top:593.94px;font-size:12.00px;color:#333;font-weight:400;font-family:'Liberation Sans';transform:scaleX(0.9675);-webkit-text-stroke:0.35px #333;">Controllo del codice a barre</div>
<div class="a" style="left:1315.5px;top:590.5px;width:43px;height:16.7px;background:#fdeded;border:1px solid #f6c9c9;border-radius:3px"></div>
<div id="t83" class="t" style="left:1322.60px;top:594.18px;font-size:10.30px;color:#c9534f;font-weight:400;font-family:'Liberation Sans';transform:scaleX(0.9972);">Errore</div>
<div id="t84" class="t" style="left:1087.70px;top:623.00px;font-size:9.80px;color:#555;font-weight:400;font-family:'Liberation Sans';transform:scaleX(0.9800);">Nessun codice a barre che soddisfi i requisiti</div>
<div class="a" style="left:1087.7px;top:641.4px;width:270.5px;height:59px;border:1px solid #efefef;border-radius:4px"></div>
<div class="a" style="left:1093.8px;top:650px;width:10.7px;height:10.6px;background:#d9534f;border-radius:2px"></div>
<div class="a" style="left:1096px;top:654.6px;width:6.3px;height:1.5px;background:#fff"></div>
<div class="a" style="left:1111.6px;top:648px;width:24px;height:14.5px;background:#fdeaea;border-radius:3px"></div>
<div id="t85" class="t" style="left:1114.90px;top:651.69px;font-size:8.40px;color:#d9534f;font-weight:400;font-family:'Liberation Sans';transform:scaleX(1.0354);">Tipo</div>
<div id="t86" class="t" style="left:1094.40px;top:668.10px;font-size:9.80px;color:#666;font-weight:400;font-family:'Liberation Sans';transform:scaleX(0.9101);">Tipo: <b style="color:#333">EAN</b></div>
<div id="t87" class="t" style="left:1094.40px;top:681.90px;font-size:9.80px;color:#666;font-weight:400;font-family:'Liberation Sans';transform:scaleX(0.9641);">Valore: <b style="color:#333">234567899992</b></div>
<div class="a" style="left:1292.9px;top:648.1px;width:58.5px;height:44.7px;border:1px solid #f0f0f0;border-radius:3px"></div>
<svg style="left:0;top:0" width="1536" height="782"><rect x="1304.80" y="657.1" width="1.00" height="24.5" fill="#666"/><rect x="1306.80" y="657.1" width="0.60" height="24.5" fill="#222"/><rect x="1308.00" y="657.1" width="0.60" height="24.5" fill="#111"/><rect x="1309.20" y="657.1" width="1.00" height="24.5" fill="#222"/><rect x="1310.80" y="657.1" width="1.40" height="24.5" fill="#666"/><rect x="1312.80" y="657.1" width="0.60" height="24.5" fill="#111"/><rect x="1314.00" y="657.1" width="1.40" height="24.5" fill="#222"/><rect x="1316.00" y="657.1" width="1.40" height="24.5" fill="#111"/><rect x="1318.00" y="657.1" width="0.60" height="24.5" fill="#666"/><rect x="1320.00" y="657.1" width="0.60" height="24.5" fill="#111"/><rect x="1321.20" y="657.1" width="0.60" height="24.5" fill="#111"/><rect x="1322.40" y="657.1" width="0.60" height="24.5" fill="#111"/><rect x="1324.00" y="657.1" width="1.00" height="24.5" fill="#111"/><rect x="1325.60" y="657.1" width="0.60" height="24.5" fill="#666"/><rect x="1326.80" y="657.1" width="1.40" height="24.5" fill="#222"/><rect x="1328.80" y="657.1" width="1.00" height="24.5" fill="#222"/><rect x="1330.40" y="657.1" width="0.60" height="24.5" fill="#222"/><rect x="1331.60" y="657.1" width="1.00" height="24.5" fill="#222"/><rect x="1333.20" y="657.1" width="1.00" height="24.5" fill="#111"/><rect x="1335.20" y="657.1" width="1.00" height="24.5" fill="#222"/><rect x="1337.60" y="657.1" width="1.00" height="24.5" fill="#111"/><rect x="1306" y="682" width="32" height="1.5" fill="#999"/></svg>
<div id="t88" class="t" style="left:1087.70px;top:713.20px;font-size:9.80px;color:#444;font-weight:400;font-family:'Liberation Sans';transform:scaleX(0.9943);">Maggiori dettagli</div>
<div class="a" style="left:1087.7px;top:722.5px;width:71.3px;height:0.8px;background:#555"></div></body></html>
